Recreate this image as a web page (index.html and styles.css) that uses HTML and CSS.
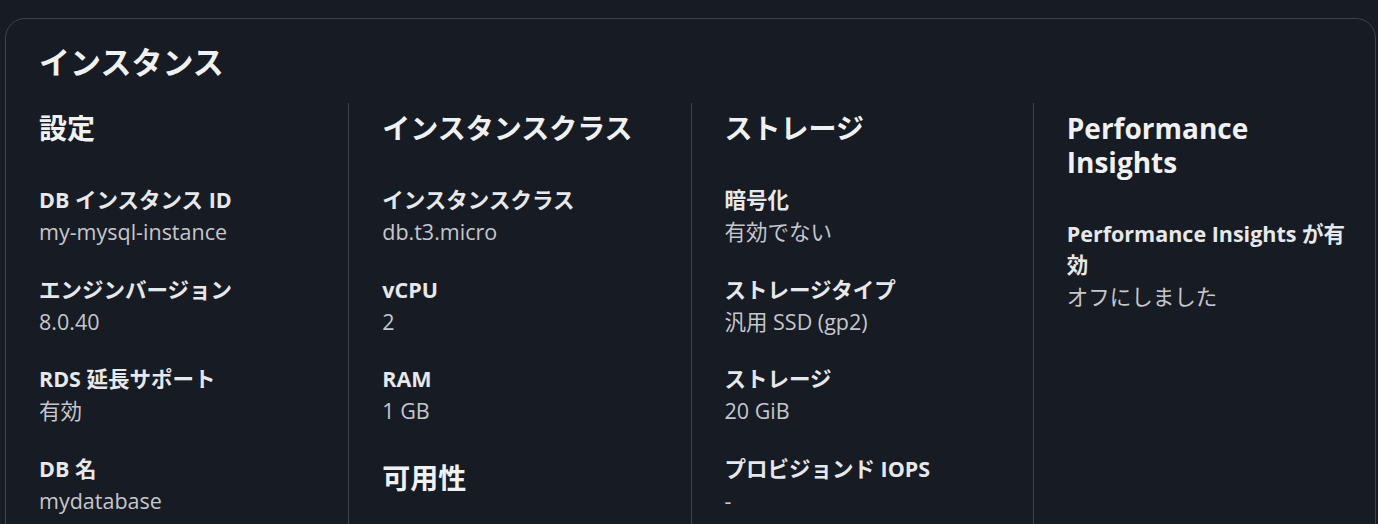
FILE: index.html
```html
<!DOCTYPE html>
<html lang="ja">
<head>
<meta charset="utf-8">
<title>インスタンス</title>
<link rel="stylesheet" href="styles.css">
</head>
<body>
<section class="card">
  <h2 class="title">インスタンス</h2>
  <div class="cols">
    <div class="col">
      <div class="sec">
        <h3 class="sec-title">設定</h3>
        <dl class="kv">
          <div class="item"><dt>DB インスタンス ID</dt><dd>my-mysql-instance</dd></div>
          <div class="item"><dt>エンジンバージョン</dt><dd>8.0.40</dd></div>
          <div class="item"><dt>RDS 延長サポート</dt><dd>有効</dd></div>
          <div class="item"><dt>DB 名</dt><dd>mydatabase</dd></div>
        </dl>
      </div>
    </div>
    <div class="col">
      <div class="sec">
        <h3 class="sec-title">インスタンスクラス</h3>
        <dl class="kv">
          <div class="item"><dt>インスタンスクラス</dt><dd>db.t3.micro</dd></div>
          <div class="item"><dt>vCPU</dt><dd>2</dd></div>
          <div class="item"><dt>RAM</dt><dd>1 GB</dd></div>
        </dl>
      </div>
      <div class="sec">
        <h3 class="sec-title">可用性</h3>
      </div>
    </div>
    <div class="col">
      <div class="sec">
        <h3 class="sec-title">ストレージ</h3>
        <dl class="kv">
          <div class="item"><dt>暗号化</dt><dd>有効でない</dd></div>
          <div class="item"><dt>ストレージタイプ</dt><dd>汎用 SSD (gp2)</dd></div>
          <div class="item"><dt>ストレージ</dt><dd>20 GiB</dd></div>
          <div class="item"><dt>プロビジョンド IOPS</dt><dd>-</dd></div>
        </dl>
      </div>
    </div>
    <div class="col">
      <div class="sec">
        <h3 class="sec-title">Performance Insights</h3>
        <dl class="kv">
          <div class="item"><dt>Performance Insights が有効</dt><dd>オフにしました</dd></div>
        </dl>
      </div>
    </div>
  </div>
</section>
</body>
</html>
```
FILE: styles.css
```css
html, body {
  margin: 0;
  padding: 0;
  background: #171b23;
}

body {
  font-family: "Open Sans", "Noto Sans CJK JP", sans-serif;
  color: #c6c6cd;
}

.card {
  margin: 18px 2px 0 5px;
  border: 1px solid #3d424c;
  border-radius: 20px;
  padding: 25px 0 0 0;
}

.title {
  margin: 0 33px 22px;
  font-size: 31px;
  line-height: 37px;
  font-weight: 700;
  color: #f0f1f3;
}

.cols {
  display: grid;
  grid-template-columns: repeat(4, 1fr);
}

.col {
  padding: 8px 28px 60px 33px;
  display: flex;
  flex-direction: column;
  gap: 35px;
}

.col + .col {
  border-left: 1px solid #3d424c;
}

.sec-title {
  margin: 0 0 39px;
  font-size: 28px;
  line-height: 34px;
  font-weight: 700;
  color: #f0f1f3;
}

.kv {
  margin: 0;
  display: flex;
  flex-direction: column;
  gap: 26.5px;
}

.item dt {
  font-size: 21.5px;
  line-height: 31px;
  font-weight: 700;
  color: #e6e8eb;
  margin-bottom: 1px;
}

.item dd {
  margin: 0;
  font-size: 21.5px;
  line-height: 31px;
  color: #c6c6cd;
}
```
